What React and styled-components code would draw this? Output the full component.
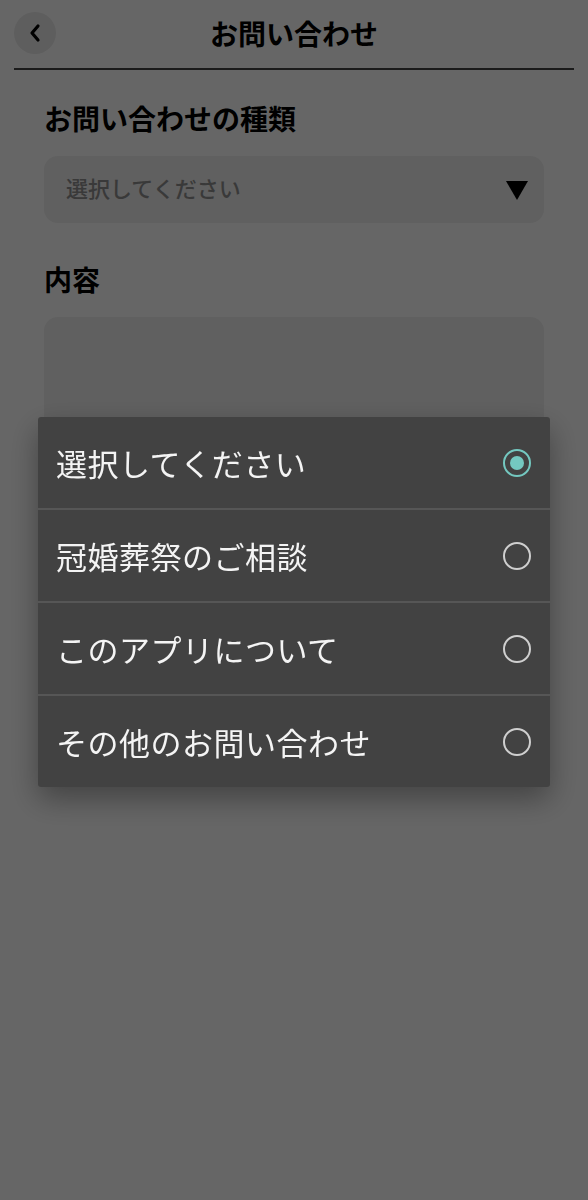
import React from "react";
import styled, { createGlobalStyle } from "styled-components";

const Global = createGlobalStyle`
  html, body { margin: 0; padding: 0; background: #ffffff; }
  body { font-family: "Noto Sans CJK JP", "Noto Sans", sans-serif; }
  * { box-sizing: border-box; }
`;

const Page = styled.div`
  min-height: 1200px;
  background: #ffffff;
  display: flex;
  flex-direction: column;
`;

const Header = styled.header`
  margin: 0 14px;
  padding: 12px 0 14px;
  border-bottom: 2px solid #444;
  display: grid;
  grid-template-columns: 42px 1fr 42px;
  align-items: center;
`;

const BackButton = styled.button`
  width: 42px;
  height: 42px;
  border-radius: 50%;
  border: none;
  background: #ebebeb;
  padding: 0;
  display: flex;
  align-items: center;
  justify-content: center;
`;

const Title = styled.h1`
  margin: 0;
  text-align: center;
  font-size: 28px;
  font-weight: 700;
  color: #000;
  line-height: 42px;
`;

const Content = styled.main`
  padding: 0 44px;
  display: flex;
  flex-direction: column;
`;

const Label = styled.h2`
  margin: ${(p) => p.$top}px 0 18px;
  font-size: 28px;
  font-weight: 700;
  color: #000;
  line-height: 40px;
`;

const Select = styled.div`
  height: 67px;
  border-radius: 14px;
  background: #f0f0f0;
  display: flex;
  align-items: center;
  justify-content: space-between;
  padding: 0 15px 0 22px;
`;

const Placeholder = styled.span`
  font-size: 22px;
  font-weight: 500;
  color: #8f8f8f;
  margin-bottom: 5px;
`;

const TextArea = styled.div`
  height: 320px;
  border-radius: 14px;
  background: #f0f0f0;
`;

const Overlay = styled.div`
  position: fixed;
  inset: 0;
  background: rgba(0, 0, 0, 0.6);
  display: flex;
  align-items: center;
  justify-content: center;
`;

const Dialog = styled.div`
  width: 512px;
  background: #424242;
  border-radius: 3px;
  box-shadow: 0 12px 30px rgba(0, 0, 0, 0.35);
  display: flex;
  flex-direction: column;
  margin-top: 4px;
`;

const Option = styled.div`
  height: ${(p) => (p.$last ? 91 : 93)}px;
  padding: 0 19px 0 18px;
  display: flex;
  align-items: center;
  justify-content: space-between;
  border-bottom: ${(p) => (p.$last ? "none" : "2px solid #565656")};
`;

const OptionText = styled.span`
  font-size: 31px;
  color: #f4f4f4;
  letter-spacing: 0.5px;
`;

const Radio = styled.span`
  width: 28px;
  height: 28px;
  border-radius: 50%;
  border: 2.5px solid ${(p) => (p.$checked ? "#74c8c0" : "#cfcfcf")};
  display: flex;
  align-items: center;
  justify-content: center;
  &::after {
    content: "";
    width: 14px;
    height: 14px;
    border-radius: 50%;
    background: #74c8c0;
    display: ${(p) => (p.$checked ? "block" : "none")};
  }
`;

const options = [
  "選択してください",
  "冠婚葬祭のご相談",
  "このアプリについて",
  "その他のお問い合わせ",
];

export default function App() {
  return (
    <>
      <Global />
      <Page>
        <Header>
          <BackButton aria-label="戻る">
            <svg width="14" height="20" viewBox="0 0 14 20">
              <path d="M10 3 L4 10 L10 17" fill="none" stroke="#000" strokeWidth="3.2" strokeLinecap="round" strokeLinejoin="round" />
            </svg>
          </BackButton>
          <Title>お問い合わせ</Title>
          <span />
        </Header>
        <Content>
          <Label $top={28}>お問い合わせの種類</Label>
          <Select>
            <Placeholder>選択してください</Placeholder>
            <svg width="24" height="22" viewBox="0 0 24 22">
              <polygon points="1,2 23,2 12,21" fill="#000" />
            </svg>
          </Select>
          <Label $top={36}>内容</Label>
          <TextArea />
        </Content>
      </Page>
      <Overlay>
        <Dialog>
          {options.map((o, i) => (
            <Option key={o} $last={i === options.length - 1}>
              <OptionText>{o}</OptionText>
              <Radio $checked={i === 0} />
            </Option>
          ))}
        </Dialog>
      </Overlay>
    </>
  );
}
